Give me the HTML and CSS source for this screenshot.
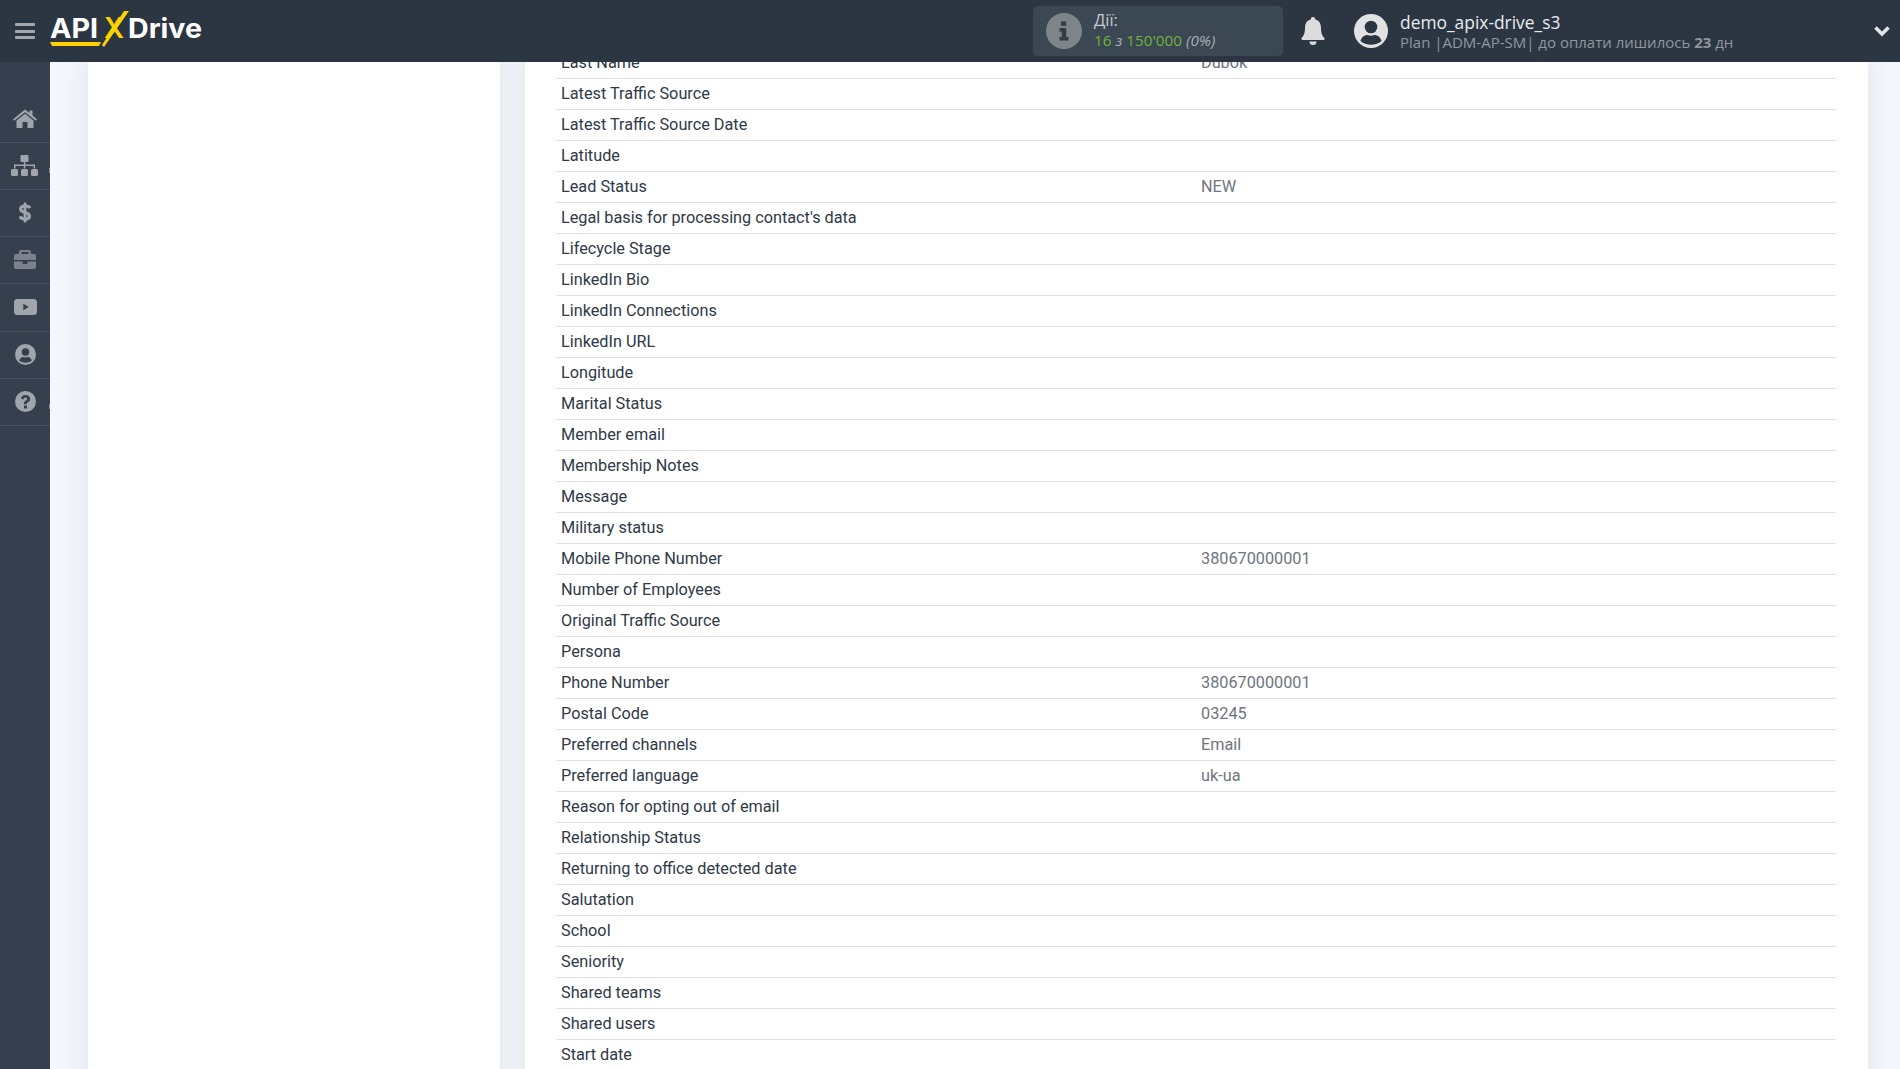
FILE: index.html
```html
<!DOCTYPE html>
<html lang="uk">
<head>
<meta charset="utf-8">
<title>ApiX-Drive</title>
<link rel="stylesheet" href="styles.css">
</head>
<body>
<div class="app">
  <header class="topbar">
    <button class="burger" aria-label="Menu"><span></span><span></span><span></span></button>
    <svg class="logo" viewBox="0 0 160 40" width="160" height="40" role="img" aria-label="ApiX-Drive">
      <text class="logo-word" x="0" y="27" textLength="48" lengthAdjust="spacingAndGlyphs">API</text>
      <text class="logo-x" x="54" y="27" textLength="20" lengthAdjust="spacingAndGlyphs">X</text>
      <polygon class="logo-y" points="52,34 74,0 79,0 54,36"/>
      <polygon class="logo-y" points="0,31 51,31 49,35 2,35"/>
      <text class="logo-word" x="78" y="27" textLength="74" lengthAdjust="spacingAndGlyphs">Drive</text>
    </svg>
    <div class="actions">
      <svg class="info" viewBox="0 0 36 36" width="36" height="36">
        <circle cx="18" cy="18" r="18" fill="#7d8589"/>
        <path fill="#333d48" d="M15 8.500h5.200v4.200H15zM13.500 15h6.700v9h2.300v3.500h-9V24h2.200v-5.500h-2.200z"/>
      </svg>
      <div class="actions-text">
        <div class="actions-title">Дії:</div>
        <div class="actions-count"><span class="green">16</span> <i>з</i> <span class="green">150'000</span> <i>(0%)</i></div>
      </div>
    </div>
    <svg class="bell" viewBox="0 0 24 30" width="24" height="30">
      <path fill="#dcdcdc" d="M12 1a2.300 2.300 0 0 1 2.300 2.400C18.600 4.400 20 8 20 12c0 6 1.600 8 3.400 10 .6.800.2 2-1 2H1.600c-1.200 0-1.600-1.200-1-2C2.400 20 4 18 4 12c0-4 1.400-7.600 5.700-8.600A2.300 2.300 0 0 1 12 1z"/>
      <path fill="#dcdcdc" d="M8.500 25.500h7a3.500 3.500 0 0 1-7 0z"/>
    </svg>
    <svg class="avatar" viewBox="0 0 34 34" width="34" height="34">
      <circle cx="17" cy="17" r="17" fill="#e2e2e2"/>
      <circle cx="17" cy="13" r="6.300" fill="#2c3643"/>
      <path fill="#2c3643" d="M6.500 27c1-4 4-6 7-6 2.300 1 4.700 1 7 0 3 0 6 2 7 6-5.500 5-15.500 5-21 0z"/>
    </svg>
    <div class="account">
      <div class="account-name">demo_apix-drive_s3</div>
      <div class="account-plan">Plan |ADM-AP-SM| до оплати лишилось <b>23</b> дн</div>
    </div>
    <svg class="chevron" viewBox="0 0 16 12" width="16" height="12">
      <path fill="none" stroke="#e4e4e4" stroke-width="3.600" d="M1.500 2.500 8 9l6.500-6.500"/>
    </svg>
  </header>

  <nav class="sidebar">
    <a class="nav-item">
      <svg viewBox="0 0 24 19" width="24" height="19"><path d="M12 0.500 16.500 4V1.500H19.500V6.500L24 10.300 22.800 11.800 12 3.200 1.200 11.800 0 10.300z"/><path d="M12 4.800 20.500 11.500V19H14.500V13H9.500V19H3.500V11.500z"/></svg>
    </a>
    <a class="nav-item tick">
      <svg class="sitemap" viewBox="0 0 27 21" width="27" height="21"><rect x="9.500" y="0" width="8" height="7" rx="1"/><rect x="12.800" y="7" width="1.500" height="4"/><rect x="3.500" y="9.500" width="20" height="1.500"/><rect x="3" y="9.500" width="1.500" height="4"/><rect x="12.800" y="9.500" width="1.500" height="4"/><rect x="22.500" y="9.500" width="1.500" height="4"/><rect x="0" y="14" width="7" height="7" rx="1.500"/><rect x="10" y="14" width="7" height="7" rx="1.500"/><rect x="20" y="14" width="7" height="7" rx="1.500"/></svg>
    </a>
    <a class="nav-item">
      <svg viewBox="0 0 12 21" width="12" height="21"><path class="dollar" d="M11 6.200C10.400 4.800 8.800 4 6.200 4 3.400 4 1.600 5.200 1.600 7.100c0 4.300 8.800 2.500 8.800 6.800 0 1.900-1.800 3.100-4.400 3.100-2.700 0-4.600-1-5.200-2.600"/><rect x="4.600" y="0.500" width="2.800" height="20" rx="1"/></svg>
    </a>
    <a class="nav-item dim">
      <svg viewBox="0 0 22 19" width="22" height="19"><path d="M7 0h8a2 2 0 0 1 2 2v2h3a2 2 0 0 1 2 2v4H0V6a2 2 0 0 1 2-2h3V2a2 2 0 0 1 2-2zm.500 2v2h7V2z" fill-rule="evenodd"/><path d="M0 11.500h8.500V14h5v-2.500H22V17a2 2 0 0 1-2 2H2a2 2 0 0 1-2-2z"/></svg>
    </a>
    <a class="nav-item tall">
      <svg viewBox="0 0 23 16" width="23" height="16"><path fill-rule="evenodd" d="M3.500 0h16A3.500 3.500 0 0 1 23 3.500v9a3.500 3.500 0 0 1-3.500 3.500h-16A3.500 3.500 0 0 1 0 12.500v-9A3.500 3.500 0 0 1 3.500 0zM9.300 4.800v6.400L14.800 8z"/></svg>
    </a>
    <a class="nav-item">
      <svg viewBox="0 0 21 21" width="21" height="21"><path fill-rule="evenodd" d="M10.500 0a10.500 10.500 0 1 1 0 21 10.500 10.500 0 0 1 0-21zm0 4.200a3.800 3.800 0 1 0 0 7.600 3.800 3.800 0 0 0 0-7.600zM4.200 16.600c3.500 2.900 9.100 2.900 12.600 0-.5-2.100-2.200-3.600-4.300-3.600-1.300.6-2.700.6-4 0-2.100 0-3.800 1.500-4.300 3.600z"/></svg>
    </a>
    <a class="nav-item tick">
      <svg viewBox="0 0 21 21" width="21" height="21"><path fill-rule="evenodd" d="M10.500 0a10.500 10.500 0 1 1 0 21 10.500 10.500 0 0 1 0-21zM9 14.500v3h3v-3zM6.200 7.500l2.300 1c.3-1.200 1-1.900 2-1.900s1.700.6 1.700 1.400c0 .7-.5 1.100-1.300 1.600-1.300.8-1.900 1.600-1.900 3v.6h2.800v-.4c0-.7.300-1 1.100-1.500 1.200-.8 2.200-1.700 2.200-3.400 0-2.300-2-3.900-4.600-3.900-2.200 0-3.600 1-4.300 2.500z"/></svg>
    </a>
  </nav>

  <main class="content">
    <div class="columns">
      <aside class="card side-card"></aside>
      <section class="card table-card">
        <div class="row"><span>Last Name</span><span class="val">Dubok</span></div>
        <div class="row"><span>Latest Traffic Source</span><span class="val"></span></div>
        <div class="row"><span>Latest Traffic Source Date</span><span class="val"></span></div>
        <div class="row"><span>Latitude</span><span class="val"></span></div>
        <div class="row"><span>Lead Status</span><span class="val">NEW</span></div>
        <div class="row"><span>Legal basis for processing contact's data</span><span class="val"></span></div>
        <div class="row"><span>Lifecycle Stage</span><span class="val"></span></div>
        <div class="row"><span>LinkedIn Bio</span><span class="val"></span></div>
        <div class="row"><span>LinkedIn Connections</span><span class="val"></span></div>
        <div class="row"><span>LinkedIn URL</span><span class="val"></span></div>
        <div class="row"><span>Longitude</span><span class="val"></span></div>
        <div class="row"><span>Marital Status</span><span class="val"></span></div>
        <div class="row"><span>Member email</span><span class="val"></span></div>
        <div class="row"><span>Membership Notes</span><span class="val"></span></div>
        <div class="row"><span>Message</span><span class="val"></span></div>
        <div class="row"><span>Military status</span><span class="val"></span></div>
        <div class="row"><span>Mobile Phone Number</span><span class="val">380670000001</span></div>
        <div class="row"><span>Number of Employees</span><span class="val"></span></div>
        <div class="row"><span>Original Traffic Source</span><span class="val"></span></div>
        <div class="row"><span>Persona</span><span class="val"></span></div>
        <div class="row"><span>Phone Number</span><span class="val">380670000001</span></div>
        <div class="row"><span>Postal Code</span><span class="val">03245</span></div>
        <div class="row"><span>Preferred channels</span><span class="val">Email</span></div>
        <div class="row"><span>Preferred language</span><span class="val">uk-ua</span></div>
        <div class="row"><span>Reason for opting out of email</span><span class="val"></span></div>
        <div class="row"><span>Relationship Status</span><span class="val"></span></div>
        <div class="row"><span>Returning to office detected date</span><span class="val"></span></div>
        <div class="row"><span>Salutation</span><span class="val"></span></div>
        <div class="row"><span>School</span><span class="val"></span></div>
        <div class="row"><span>Seniority</span><span class="val"></span></div>
        <div class="row"><span>Shared teams</span><span class="val"></span></div>
        <div class="row"><span>Shared users</span><span class="val"></span></div>
        <div class="row"><span>Start date</span><span class="val"></span></div>
      </section>
    </div>
  </main>
</div>
</body>
</html>
```
FILE: styles.css
```css
* { box-sizing: border-box; }
html, body { margin: 0; height: 100%; overflow: hidden; }
body { background: #f4f7fc; font-family: "Roboto", "Liberation Sans", sans-serif; }

.app {
  display: grid;
  grid-template-columns: 50px 1fr;
  grid-template-rows: 62px 1fr;
  height: 100vh;
}

/* top bar */
.topbar {
  grid-column: 1 / 3;
  position: relative;
  z-index: 2;
  display: flex;
  align-items: center;
  background: #2c3643;
  font-family: "Open Sans", "Liberation Sans", sans-serif;
}
.burger {
  display: flex;
  flex-direction: column;
  gap: 3.500px;
  width: 20px;
  margin-left: 15px;
  padding: 0;
  border: 0;
  background: none;
}
.burger span { display: block; height: 3px; border-radius: 1px; background: #a4a8ad; }
.logo { margin-left: 15px; flex: none; overflow: visible; }
.logo-word { font-family: "Inter", "Open Sans", sans-serif; font-weight: 700; font-size: 27px; fill: #fff; }
.logo-x { font-family: "Inter", "Open Sans", sans-serif; font-weight: 600; font-size: 28px; fill: #ffd200; }
.logo-y { fill: #ffd200; }

.actions {
  display: flex;
  align-items: center;
  width: 250px;
  height: 50px;
  margin-left: auto;
  padding-left: 13px;
  border-radius: 5px;
  background: #3b4752;
}
.info { flex: none; }
.actions-text { margin-left: 12px; font-size: 15.300px; line-height: 20px; color: #c6cbcf; }
.actions-title { margin-top: -2px; font-size: 16.500px; }
.actions-count { color: #8f979f; }
.actions-count i { color: #a9afb4; }
.green { color: #6eb33f; }
.bell { margin-left: 18px; flex: none; }
.avatar { margin-left: 29px; flex: none; }
.account { margin-left: 12px; width: 474px; }
.account-name { font-size: 17.400px; line-height: 22px; color: #e9ecee; }
.account-plan { font-size: 15px; line-height: 19px; color: #8f979f; }
.chevron { margin-right: 10px; flex: none; }

/* side navigation */
.sidebar { padding-top: 34px; background: #363f4e; }
.nav-item {
  position: relative;
  display: flex;
  align-items: center;
  justify-content: center;
  height: 47px;
  padding-bottom: 2px;
  border-bottom: 1px solid #465060;
  fill: #a0a5ab;
}
.nav-item.dim { fill: #7c828b; }
.nav-item.tall { height: 48px; }
.nav-item.tick::after {
  content: "";
  position: absolute;
  right: 0;
  bottom: 16px;
  width: 1px;
  height: 5px;
  background: #8a909a;
}
.sitemap { margin-left: -1px; }
.dollar { fill: none; stroke: #a0a5ab; stroke-width: 3.200px; }

/* content */
.content { min-width: 0; overflow: hidden; }
.columns {
  display: flex;
  gap: 25px;
  min-height: 1100px;
  margin-top: -14px;
  padding: 0 32px 0 38px;
}
.card { background: #fff; box-shadow: 0 0 30px rgba(40, 50, 70, .09); }
.side-card { flex: none; width: 412px; }
.table-card { flex: 1; min-width: 0; padding: 0 32px 0 31px; }
.row {
  display: grid;
  grid-template-columns: 1fr 1fr;
  height: 31px;
  border-bottom: 1px solid #e1e1e1;
  font-size: 16.250px;
  line-height: 30px;
  color: #2f3947;
}
.row span { padding-left: 5px; white-space: nowrap; }
.row .val { color: #6e7580; }
```
